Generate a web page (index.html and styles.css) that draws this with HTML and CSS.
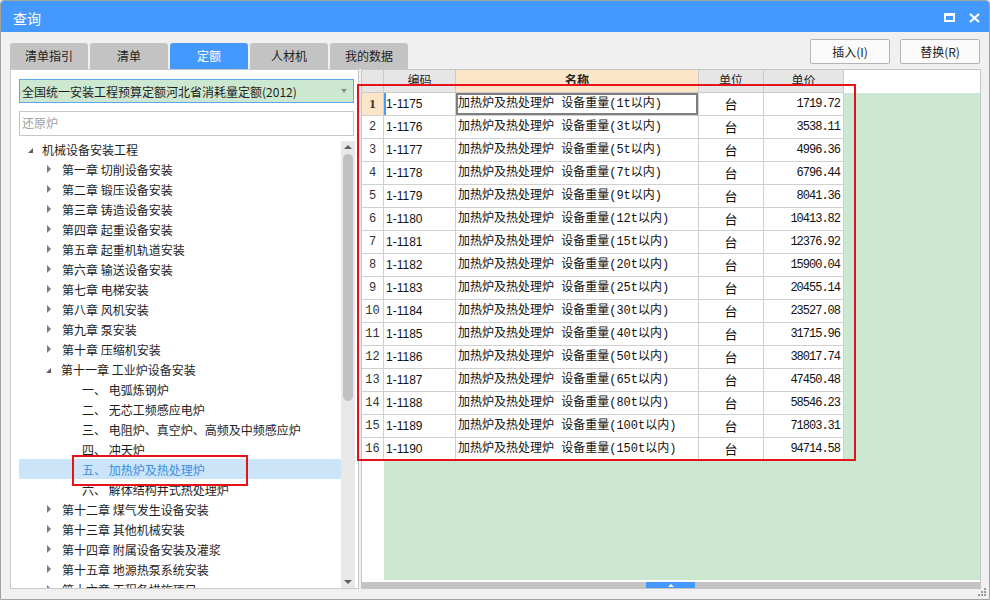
FILE: index.html
```html
<!DOCTYPE html>
<html lang="zh-CN">
<head>
<meta charset="utf-8">
<title>查询</title>
<link rel="stylesheet" href="styles.css">
</head>
<body>
<div class="window">
  <div class="titlebar">
    <span class="title">查询</span>
    <div class="win-btns">
      <svg class="ico-max" width="11" height="9" viewBox="0 0 11 9"><rect x="1" y="1.5" width="9" height="6.5" fill="none" stroke="#fff" stroke-width="2"/><rect x="0" y="0" width="11" height="3" fill="#fff"/></svg>
      <svg class="ico-close" width="11" height="10" viewBox="0 0 11 10"><path d="M1 1 L10 9 M10 1 L1 9" stroke="#fff" stroke-width="2.2" fill="none"/></svg>
    </div>
  </div>

  <div class="toolbar">
    <div class="tabs">
      <div class="tab">清单指引</div>
      <div class="tab">清单</div>
      <div class="tab active">定额</div>
      <div class="tab">人材机</div>
      <div class="tab">我的数据</div>
    </div>
    <div class="actions">
      <button class="btn">插入(I)</button>
      <button class="btn">替换(R)</button>
    </div>
  </div>

  <div class="main">
    <div class="left">
      <div class="combo"><span class="combo-text">全国统一安装工程预算定额河北省消耗量定额(2012)</span><span class="caret"></span></div>
      <div class="search">还原炉</div>
      <div class="tree-wrap">
        <div class="tree">
          <div class="node lv0"><i class="exp open"></i><span>机械设备安装工程</span></div>
          <div class="node lv1"><i class="exp"></i><span>第一章 切削设备安装</span></div>
          <div class="node lv1"><i class="exp"></i><span>第二章 锻压设备安装</span></div>
          <div class="node lv1"><i class="exp"></i><span>第三章 铸造设备安装</span></div>
          <div class="node lv1"><i class="exp"></i><span>第四章 起重设备安装</span></div>
          <div class="node lv1"><i class="exp"></i><span>第五章 起重机轨道安装</span></div>
          <div class="node lv1"><i class="exp"></i><span>第六章 输送设备安装</span></div>
          <div class="node lv1"><i class="exp"></i><span>第七章 电梯安装</span></div>
          <div class="node lv1"><i class="exp"></i><span>第八章 风机安装</span></div>
          <div class="node lv1"><i class="exp"></i><span>第九章 泵安装</span></div>
          <div class="node lv1"><i class="exp"></i><span>第十章 压缩机安装</span></div>
          <div class="node lv1"><i class="exp open"></i><span>第十一章 工业炉设备安装</span></div>
          <div class="node lv2"><span>一、 电弧炼钢炉</span></div>
          <div class="node lv2"><span>二、 无芯工频感应电炉</span></div>
          <div class="node lv2"><span>三、 电阻炉、真空炉、高频及中频感应炉</span></div>
          <div class="node lv2"><span>四、 冲天炉</span></div>
          <div class="node lv2 selected"><span>五、 加热炉及热处理炉</span></div>
          <div class="node lv2"><span>六、 解体结构井式热处理炉</span></div>
          <div class="node lv1"><i class="exp"></i><span>第十二章 煤气发生设备安装</span></div>
          <div class="node lv1"><i class="exp"></i><span>第十三章 其他机械安装</span></div>
          <div class="node lv1"><i class="exp"></i><span>第十四章 附属设备安装及灌浆</span></div>
          <div class="node lv1"><i class="exp"></i><span>第十五章 地源热泵系统安装</span></div>
          <div class="node lv1"><i class="exp"></i><span>第十六章 工程各措施项目</span></div>
        </div>
        <div class="vscroll">
          <div class="arr"><i class="tri-up"></i></div>
          <div class="vthumb"></div>
          <div class="vspace"></div>
          <div class="arr"><i class="tri-down"></i></div>
        </div>
      </div>
    </div>

    <div class="grid">
      <div class="ghead">
        <div class="c c-no"></div>
        <div class="c c-code">编码</div>
        <div class="c c-name hl">名称</div>
        <div class="c c-unit">单位</div>
        <div class="c c-price">单价</div>
      </div>
      <div class="gbody">
        <div class="row cur"><div class="c c-no">1</div><div class="c c-code">1-1175</div><div class="c c-name">加热炉及热处理炉 设备重量(1t以内)</div><div class="c c-unit">台</div><div class="c c-price">1719.72</div></div>
        <div class="row"><div class="c c-no">2</div><div class="c c-code">1-1176</div><div class="c c-name">加热炉及热处理炉 设备重量(3t以内)</div><div class="c c-unit">台</div><div class="c c-price">3538.11</div></div>
        <div class="row"><div class="c c-no">3</div><div class="c c-code">1-1177</div><div class="c c-name">加热炉及热处理炉 设备重量(5t以内)</div><div class="c c-unit">台</div><div class="c c-price">4996.36</div></div>
        <div class="row"><div class="c c-no">4</div><div class="c c-code">1-1178</div><div class="c c-name">加热炉及热处理炉 设备重量(7t以内)</div><div class="c c-unit">台</div><div class="c c-price">6796.44</div></div>
        <div class="row"><div class="c c-no">5</div><div class="c c-code">1-1179</div><div class="c c-name">加热炉及热处理炉 设备重量(9t以内)</div><div class="c c-unit">台</div><div class="c c-price">8041.36</div></div>
        <div class="row"><div class="c c-no">6</div><div class="c c-code">1-1180</div><div class="c c-name">加热炉及热处理炉 设备重量(12t以内)</div><div class="c c-unit">台</div><div class="c c-price">10413.82</div></div>
        <div class="row"><div class="c c-no">7</div><div class="c c-code">1-1181</div><div class="c c-name">加热炉及热处理炉 设备重量(15t以内)</div><div class="c c-unit">台</div><div class="c c-price">12376.92</div></div>
        <div class="row"><div class="c c-no">8</div><div class="c c-code">1-1182</div><div class="c c-name">加热炉及热处理炉 设备重量(20t以内)</div><div class="c c-unit">台</div><div class="c c-price">15900.04</div></div>
        <div class="row"><div class="c c-no">9</div><div class="c c-code">1-1183</div><div class="c c-name">加热炉及热处理炉 设备重量(25t以内)</div><div class="c c-unit">台</div><div class="c c-price">20455.14</div></div>
        <div class="row"><div class="c c-no">10</div><div class="c c-code">1-1184</div><div class="c c-name">加热炉及热处理炉 设备重量(30t以内)</div><div class="c c-unit">台</div><div class="c c-price">23527.08</div></div>
        <div class="row"><div class="c c-no">11</div><div class="c c-code">1-1185</div><div class="c c-name">加热炉及热处理炉 设备重量(40t以内)</div><div class="c c-unit">台</div><div class="c c-price">31715.96</div></div>
        <div class="row"><div class="c c-no">12</div><div class="c c-code">1-1186</div><div class="c c-name">加热炉及热处理炉 设备重量(50t以内)</div><div class="c c-unit">台</div><div class="c c-price">38017.74</div></div>
        <div class="row"><div class="c c-no">13</div><div class="c c-code">1-1187</div><div class="c c-name">加热炉及热处理炉 设备重量(65t以内)</div><div class="c c-unit">台</div><div class="c c-price">47450.48</div></div>
        <div class="row"><div class="c c-no">14</div><div class="c c-code">1-1188</div><div class="c c-name">加热炉及热处理炉 设备重量(80t以内)</div><div class="c c-unit">台</div><div class="c c-price">58546.23</div></div>
        <div class="row"><div class="c c-no">15</div><div class="c c-code">1-1189</div><div class="c c-name">加热炉及热处理炉 设备重量(100t以内)</div><div class="c c-unit">台</div><div class="c c-price">71803.31</div></div>
        <div class="row"><div class="c c-no">16</div><div class="c c-code">1-1190</div><div class="c c-name">加热炉及热处理炉 设备重量(150t以内)</div><div class="c c-unit">台</div><div class="c c-price">94714.58</div></div>
      </div>
      <div class="hscroll"><div class="hthumb"><i class="tri-up-w"></i></div></div>
    </div>
  </div>

  <div class="statusbar">
    <svg class="grip" width="9" height="9" viewBox="0 0 9 9"><g fill="#9a9a9a"><rect x="6" y="0" width="2" height="2"/><rect x="3" y="3" width="2" height="2"/><rect x="6" y="3" width="2" height="2"/><rect x="0" y="6" width="2" height="2"/><rect x="3" y="6" width="2" height="2"/><rect x="6" y="6" width="2" height="2"/></g></svg>
  </div>
</div>
<div class="mark mark-tree"></div>
<div class="mark mark-grid"></div>
</body>
</html>
```

FILE: styles.css
```css
* { box-sizing: border-box; }
html, body { margin: 0; padding: 0; }
body {
  position: relative;
  width: 990px;
  height: 600px;
  overflow: hidden;
  font-family: "Noto Sans CJK SC", "Liberation Sans", sans-serif;
  font-size: 12px;
  color: #1e1e1e;
  background: #f0f0f0;
}
.window {
  width: 990px;
  height: 600px;
  border: 1px solid #a2a2a2;
  border-radius: 4px 4px 0 0;
  background: #f0f0f0;
  display: flex;
  flex-direction: column;
  overflow: hidden;
}
.titlebar {
  height: 31px;
  flex: none;
  background: #4499fe;
  display: flex;
  align-items: center;
  justify-content: space-between;
  padding: 2px 9px 0 12px;
}
.title { color: #fff; font-size: 14px; }
.win-btns { display: flex; align-items: center; gap: 14px; }
.ico-max { margin-top: -1px; }

.toolbar {
  height: 37px;
  flex: none;
  display: flex;
  justify-content: space-between;
  padding: 0 9px 0 9px;
}
.tabs { display: flex; gap: 2px; align-self: flex-end; }
.tab {
  width: 78px;
  height: 26px;
  line-height: 26px;
  text-align: center;
  background: #c3c3c3;
  border-radius: 3px 3px 0 0;
  color: #222;
  font-size: 12px;
}
.tab.active { background: #4499fe; color: #fff; }
.actions { display: flex; gap: 10px; padding-top: 7px; }
.btn {
  width: 80px;
  height: 25px;
  border: 1px solid #b4b4b4;
  border-radius: 2px;
  background: #fbfbfb;
  font-family: inherit;
  font-size: 12px;
  color: #222;
  padding: 0;
}

.main {
  height: 520px;
  flex: none;
  display: flex;
  gap: 2px;
  padding-left: 9px;
}
.left {
  width: 349px;
  height: 520px;
  border: 1px solid #c9c9c9;
  background: #fff;
  padding: 9px 2px 0 8px;
  display: flex;
  flex-direction: column;
}
.combo {
  height: 24px;
  margin-right: 2px;
  border: 1px solid #5ea6ef;
  background: #cde8d0;
  display: flex;
  align-items: center;
  justify-content: space-between;
  padding: 0 6px 0 2px;
  font-size: 12px;
}
.caret {
  width: 0; height: 0;
  border-top: 4px solid #8a8a8a;
  border-left: 3.5px solid transparent;
  border-right: 3.5px solid transparent;
}
.search {
  height: 25px;
  margin-top: 8px;
  margin-right: 2px;
  border: 1px solid #c6c6c6;
  padding-left: 2px;
  line-height: 22px;
  color: #a0a0a0;
}
.tree-wrap {
  margin-top: 5px;
  height: 447px;
  display: flex;
  overflow: hidden;
  padding-right: 1px;
}
.tree { flex: 1; overflow: hidden; margin-top: -2px; }
.node {
  height: 20px;
  display: flex;
  align-items: center;
  white-space: nowrap;
  color: #1e1e1e;
}
.lv0 { padding-left: 9px; }
.lv1 { padding-left: 28px; }
.lv2 { padding-left: 63px; }
.exp {
  display: block;
  flex: none;
  width: 0; height: 0;
  border-left: 4px solid #7a7a7a;
  border-top: 4px solid transparent;
  border-bottom: 4px solid transparent;
  margin-right: 11px;
}
.exp.open {
  border-left: 5px solid transparent;
  border-top: 0;
  border-bottom: 5px solid #5c5c5c;
  margin-right: 9px;
  margin-top: 2px;
}
.lv0 .exp.open { margin-right: 9px; }
.lv1 .exp.open { margin-left: -1px; margin-right: 10px; }
.node.selected { background: #cce4f7; color: #3b8de4; }

.vscroll {
  width: 14px;
  flex: none;
  background: #e8e8e8;
  display: flex;
  flex-direction: column;
  align-items: center;
}
.arr { height: 12px; display: flex; align-items: center; justify-content: center; flex: none; }
.tri-up { width: 0; height: 0; border-bottom: 4px solid #606060; border-left: 4px solid transparent; border-right: 4px solid transparent; }
.tri-down { width: 0; height: 0; border-top: 4px solid #606060; border-left: 4px solid transparent; border-right: 4px solid transparent; }
.vthumb { width: 10px; height: 247px; margin-top: 1px; background: #c1c1c1; border-radius: 5px; flex: none; }
.vspace { flex: 1; }

.grid {
  width: 620px;
  height: 520px;
  border: 1px solid #c6c6c6;
  background: #fff;
  display: flex;
  flex-direction: column;
}
.ghead { height: 23px; flex: none; display: flex; }
.c {
  height: 23px;
  flex: none;
  border-right: 1px solid #d0d0d0;
  border-bottom: 1px solid #d0d0d0;
  line-height: 22px;
  white-space: nowrap;
  overflow: hidden;
}
.c-no { width: 22px; text-align: center; }
.c-code { width: 72px; }
.c-name { width: 243px; }
.c-unit { width: 65px; text-align: center; }
.c-price { width: 80px; text-align: right; }
.ghead .c { background: #e6e6e6; text-align: center; color: #222; border-color: #cbcbcb; line-height: 20px; }
.ghead .c.hl { background: #fde6c8; font-weight: bold; }

.gbody {
  flex: 1;
  background: linear-gradient(to right, #fff 0, #fff 22px, #cde8d0 22px);
}
.row { display: flex; }
.row .c { background: #fff; }
.row .c-no { font-family: "Liberation Mono", monospace; font-size: 12px; color: #333; }
.row .c-code { font-family: "Liberation Sans", sans-serif; font-size: 12px; padding-left: 2px; color: #111; }
.row .c-name { font-family: "Liberation Mono", "Noto Sans CJK SC", monospace; font-size: 12px; padding-left: 2px; color: #111; }
.row .c-unit { font-size: 13px; color: #111; }
.row .c-price { font-family: "Liberation Mono", monospace; font-size: 12px; letter-spacing: -1px; padding-right: 3px; color: #111; }
.row.cur .c-no { background: #fde6c8; font-weight: bold; font-family: "Liberation Serif", serif; font-size: 13px; }
.row.cur .c-code { box-shadow: inset 2px 0 0 #4499fe; }
.row.cur .c-name { box-shadow: inset 0 0 0 2px #7e7e7e; }

.hscroll {
  height: 8px;
  flex: none;
  border-top: 2px solid #fff;
  background: #c3c3c3;
  position: relative;
}
.hthumb {
  position: absolute;
  left: 284px;
  top: 0;
  width: 49px;
  height: 6px;
  background: #4499fe;
  display: flex;
  justify-content: center;
  align-items: center;
}
.tri-up-w { width: 0; height: 0; border-bottom: 3px solid #fff; border-left: 3px solid transparent; border-right: 3px solid transparent; }

.statusbar {
  flex: 1;
  position: relative;
}
.grip { position: absolute; right: 2px; top: -1px; }

.mark {
  position: absolute;
  border: 2px solid #e5121c;
}
.mark-tree { left: 72px; top: 455px; width: 176px; height: 31px; }
.mark-grid { left: 357px; top: 84px; width: 499px; height: 377px; }
```
